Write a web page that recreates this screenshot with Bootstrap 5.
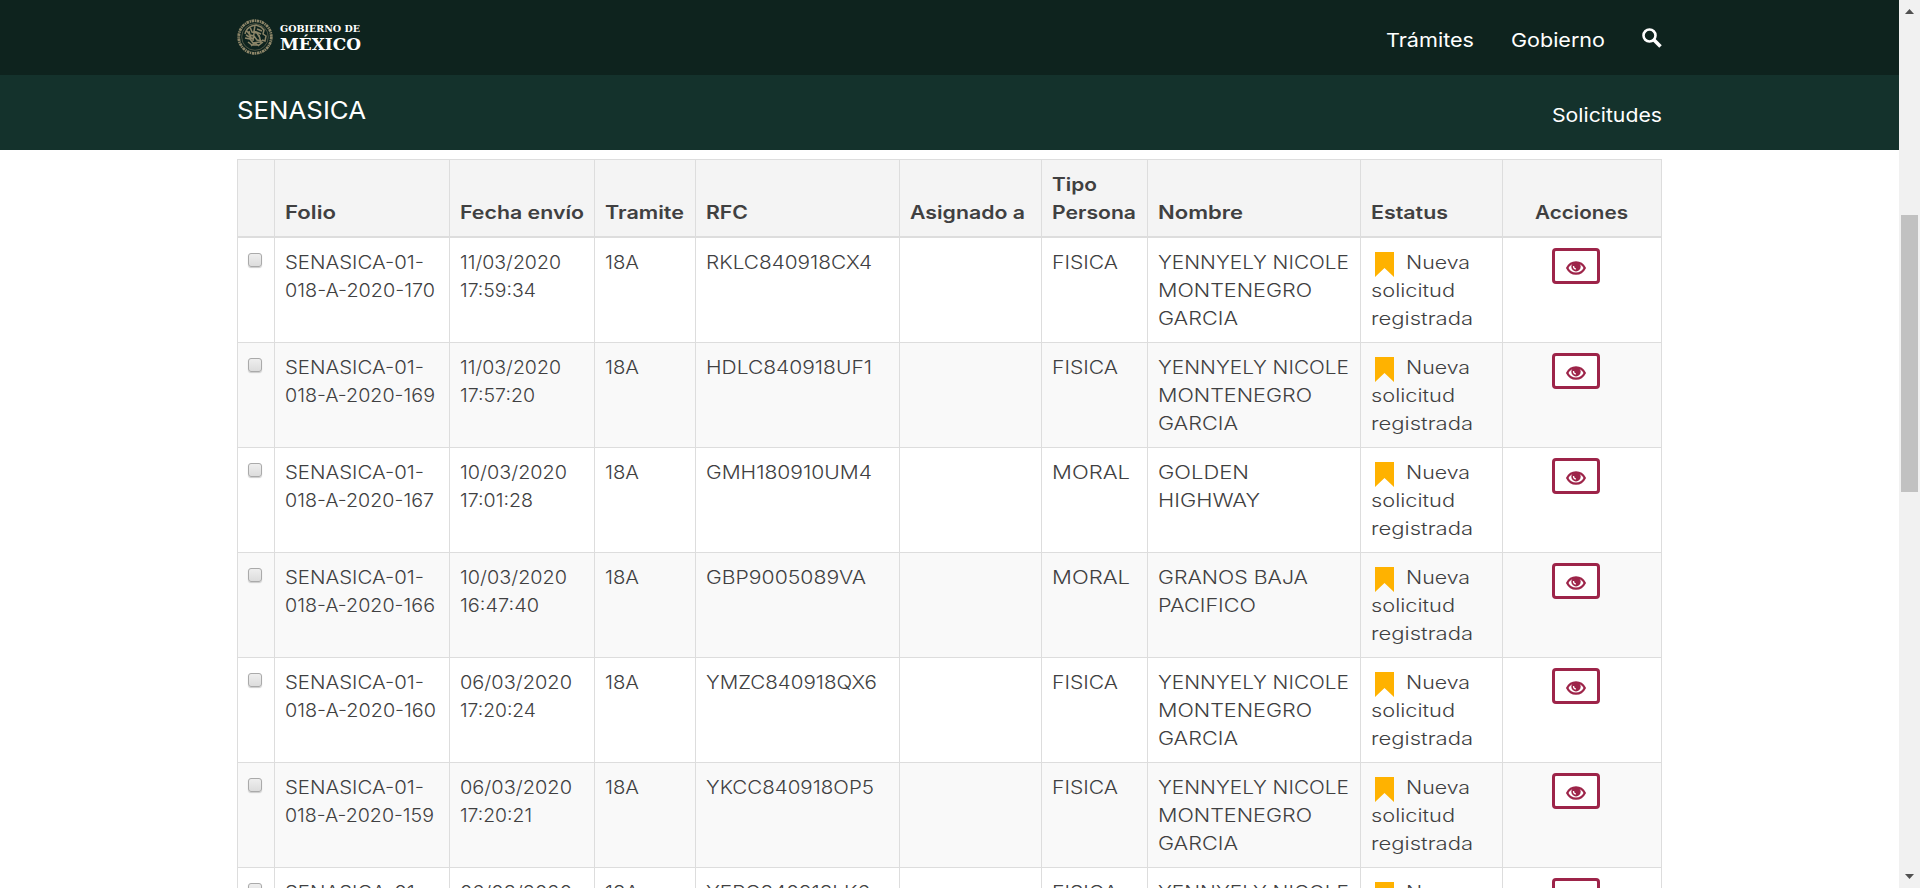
<!DOCTYPE html>
<html lang="es"><head><meta charset="utf-8"><title>SENASICA</title>
<link href="https://cdn.jsdelivr.net/npm/bootstrap@5.3.0/dist/css/bootstrap.min.css" rel="stylesheet">
<style>
html,body{height:100%;overflow:hidden}
body{font-family:Inter,sans-serif;color:#404041;background:#fff}
.page-view{height:888px;overflow:hidden}
.wrap{width:1425px;margin-left:237px}
.gob{height:75px;background:#0e231e}
.sub{height:75px;background:#14322c}
.gob a,.sub a{color:#fff;text-decoration:none;font-size:19px;line-height:28px;white-space:nowrap;display:block}
.gob nav{gap:37px}
.gob nav .nav-txt{padding-top:7px}
.sub .brand{font-size:24.5px;line-height:32px;padding-bottom:5px}
.sub .sol{padding-top:7px}
.logo-txt{font-family:"DejaVu Serif",serif;font-weight:700;fill:#fff}
.fit{display:inline-block;transform-origin:0 50%;white-space:nowrap;vertical-align:top}
.grid-tbl{table-layout:fixed;width:1425px;border-collapse:collapse;margin-top:9px;font-size:18.3px;line-height:28px;font-weight:300}
.grid-tbl th,.grid-tbl td{border:1px solid #ddd;padding:10px 10px;vertical-align:top;white-space:nowrap}
.grid-tbl th{background:#f4f4f4;font-weight:600;vertical-align:bottom;border-bottom-width:2px}
.grid-tbl th:last-child{padding-left:32px}
.grid-tbl tbody tr:nth-child(even){background:#f9f9f9}
.grid-tbl td{height:105px}
.ln{display:block;height:28px}
.chk{width:14px;height:14px;margin:5px 0 0;border:1px solid #aaa;border-radius:3px;background:linear-gradient(#eee,#dcdcdc);box-shadow:0 1px 1px #ccc}
.btn-eye{width:48px;height:36px;border:3px solid #9d2449;border-radius:4px;padding:3px 0 0;background:#fff;display:flex;align-items:center;justify-content:center;margin-left:39px}
.mk{margin:4px 12px -1px 4px}
.scroll-rail{width:21px;background:#f1f1f1}
.thumb{width:17px;height:277px;background:#c1c1c1;margin-top:190px}
</style></head><body>
<div class="d-flex page-view">
<div class="flex-grow-1">
<header class="gob"><div class="wrap d-flex align-items-center h-100">
<svg width="130" height="50" viewBox="0 0 130 50"><g fill="none" stroke="#8c8568"><circle cx="18" cy="24" r="16.300" stroke-width="2.800" stroke-dasharray="2.600 .7 1.300 .6"/><circle cx="18" cy="24" r="13.300" stroke-width=".5"/><path stroke-width="1.500" d="M8 21c1-4 4-7 7-8l4-1 5 2 3 3-1 4 3 2-1 5-3-1M9 17l4 5 4 1 3 4 5 1M8 25l5 1 3 4 7-1M13 14l2 5 5 1 3 5M18 13l-1 5 7 3M11 29l4 3h7l4-3M9 22l7 4M20 16l5 2M14 33l4-3 4 3M22 22l2 8M12 18l2 9M17 20l-1 8"/></g>
<text class="logo-txt" x="43" y="19" font-size="9" textLength="80" lengthAdjust="spacingAndGlyphs">GOBIERNO DE</text><text class="logo-txt" x="43" y="36.500" font-size="16" textLength="81" lengthAdjust="spacingAndGlyphs">MÉXICO</text></svg>
<nav class="ms-auto d-flex align-items-center"><a href="#" class="nav-txt"><span class="fit" data-w="88">Trámites</span></a><a href="#" class="nav-txt"><span class="fit" data-w="94">Gobierno</span></a>
<a href="#" aria-label="Buscar"><svg class="d-block" width="20" height="20" viewBox="0 0 20 20" fill="none" stroke="#fff"><circle cx="7.500" cy="7.500" r="6" stroke-width="2.600"/><path d="M11.800 11.800l6.700 6.700" stroke-width="3.600"/></svg></a></nav></div></header>
<div class="sub"><div class="wrap d-flex justify-content-between align-items-center h-100"><a href="#" class="brand"><span class="fit" data-w="129">SENASICA</span></a><a href="#" class="sol"><span class="fit" data-w="110">Solicitudes</span></a></div></div>
<main class="wrap"><table class="grid-tbl"><colgroup id="cols"></colgroup><thead><tr id="head"></tr></thead><tbody id="rows"></tbody></table></main>
</div>
<div class="scroll-rail d-flex flex-column align-items-center"><svg width="21" height="25"><path d="M6 14h9l-4.500-5z" fill="#505050"/></svg><div class="thumb"></div><svg class="mt-auto" width="21" height="21"><path d="M6 7h9l-4.500 5z" fill="#505050"/></svg></div>
</div>
<script src="https://cdn.jsdelivr.net/npm/bootstrap@5.3.0/dist/js/bootstrap.bundle.min.js"></script>
<script>
// each text is [string, width in px]; the width sets how far the letters are extended
const fit=([t,w])=>`<span class="fit" data-w="${w}">${t}</span>`;
const L=a=>a.map(x=>`<div class="ln">${fit(x)}</div>`).join('');
document.getElementById('cols').innerHTML=[37,175,145,101,204,142,106,213,142,159].map(w=>`<col style="width:${w}px">`).join('');
document.getElementById('head').innerHTML=[[],[['Folio',51]],[['Fecha envío',124]],[['Tramite',79]],[['RFC',42]],[['Asignado a',115]],[['Tipo',45],['Persona',84]],[['Nombre',85]],[['Estatus',77]],[['Acciones',93]]].map(h=>`<th>${L(h)}</th>`).join('');
const Y=[['YENNYELY NICOLE',191],['MONTENEGRO',154],['GARCIA',80]],F=['FISICA',66],M=['MORAL',78];
const R=[
['170',150,['11/03/2020',101],['17:59:34',76],['RKLC840918CX4',166],F,Y],
['169',150,['11/03/2020',101],['17:57:20',75],['HDLC840918UF1',166],F,Y],
['167',149,['10/03/2020',107],['17:01:28',73],['GMH180910UM4',166],M,[['GOLDEN',91],['HIGHWAY',102]]],
['166',150,['10/03/2020',107],['16:47:40',79],['GBP9005089VA',160],M,[['GRANOS BAJA',150],['PACIFICO',98]]],
['160',151,['06/03/2020',112],['17:20:24',76],['YMZC840918QX6',171],F,Y],
['159',149,['06/03/2020',112],['17:20:21',72],['YKCC840918OP5',168],F,Y],
['158',149,['06/03/2020',112],['17:20:18',72],['YERC840918LK6',164],F,Y]];
const eye='<svg width="20" height="14" viewBox="0 0 20 14"><path d="M1.200 7C5-.6 15-.6 18.800 7 15 14.600 5 14.600 1.200 7z" fill="none" stroke="#9d2449" stroke-width="2.200"/><circle cx="10" cy="5.800" r="4.700" fill="#9d2449"/><path d="M7.500 5c0 2 .8 2.800 2.300 3" fill="none" stroke="#fff" stroke-width="1.300"/></svg>';
document.getElementById('rows').innerHTML=R.map(r=>`<tr><td><div class="chk"></div></td><td>${L([['SENASICA-01-',139],['018-A-2020-'+r[0],r[1]]])}</td><td>${L([r[2],r[3]])}</td><td>${L([['18A',34]])}</td><td>${L([r[4]])}</td><td></td><td>${L([r[5]])}</td><td>${L(r[6])}</td><td><div class="d-flex ln"><svg class="mk" width="19" height="25"><path fill="#ffb200" d="M0 0h19v25l-9.500-9-9.500 9z"/></svg>${fit(['Nueva',64])}</div>${L([['solicitud',84],['registrada',102]])}</td><td><button class="btn-eye">${eye}</button></td></tr>`).join('');
document.querySelectorAll('.fit').forEach(e=>{
  const w=+e.dataset.w,n=e.getBoundingClientRect().width;
  e.style.width=w+'px';
  e.style.transform=`scaleX(${w/n})`;
});
</script></body></html>
